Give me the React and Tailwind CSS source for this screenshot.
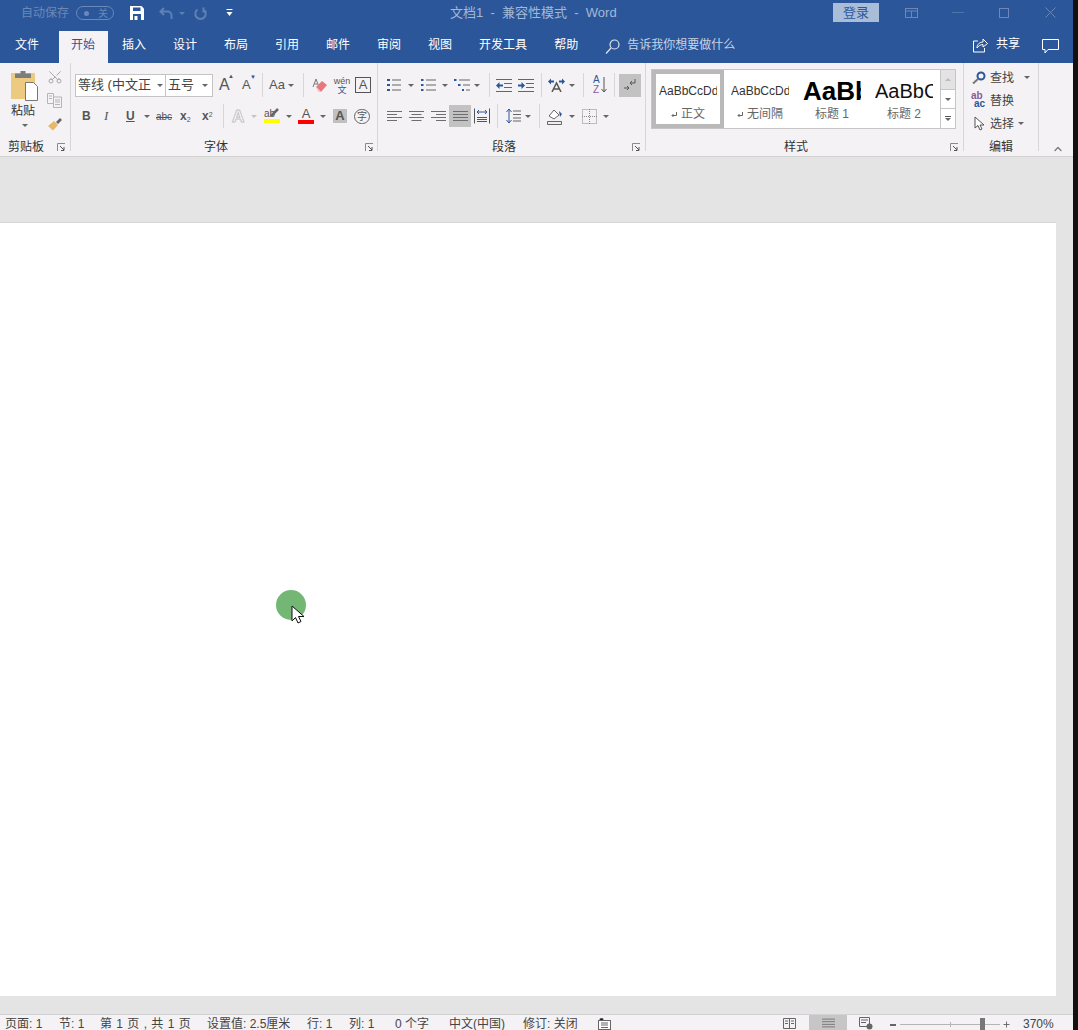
import { ChevronUp, Plus, Scissors } from "lucide-react";

const Caret = ({ className = "" }) => (
  <span className={`inline-block w-0 h-0 shrink-0 border-x-[3px] border-x-transparent border-t-[3px] border-t-[#666] ${className}`} />
);

const Sep = ({ className = "" }) => <span className={`w-px h-[24px] bg-[#d8d6d8] shrink-0 ${className}`} />;

const Launcher = () => (
  <svg width="9" height="9" viewBox="0 0 9 9" className="shrink-0">
    <path d="M0.5 8V0.5H8" fill="none" stroke="#8a8a8a" />
    <path d="M3 3l4 4M7 4v3.5H4" fill="none" stroke="#555" />
  </svg>
);

const Lines = ({ align = "left", w = 15 }) => {
  const rows = align === "left" ? [[0, 15], [0, 10], [0, 15], [0, 10]]
    : align === "center" ? [[0, 15], [2.5, 10], [0, 15], [2.5, 10]]
    : align === "right" ? [[0, 15], [5, 10], [0, 15], [5, 10]]
    : [[0, 15], [0, 15], [0, 15], [0, 15]];
  return (
    <svg width={w} height="12" viewBox="0 0 15 12" className="shrink-0">
      {rows.map((r, i) => (
        <rect key={i} x={r[0]} y={i * 3 + 1} width={r[1]} height="1" fill="#6e6e6e" />
      ))}
    </svg>
  );
};

const tabs = ["插入", "设计", "布局", "引用", "邮件", "审阅", "视图", "开发工具", "帮助"];

function TitleBar() {
  return (
    <div className="h-[31px] pb-[5px] flex items-center relative text-[12px] text-[#6a88b8]">
      <span className="ml-[21px] w-[50px]">自动保存</span>
      <span className="ml-[5px] w-[38px] h-[14px] rounded-full border border-[#6a88b8] flex items-center justify-between pl-[7px] pr-[5px] text-[10px]">
        <span className="w-[5px] h-[5px] rounded-full bg-[#6a88b8]" />
        <span>关</span>
      </span>
      <svg width="14" height="14" viewBox="0 0 14 14" className="ml-[16px]">
        <path d="M0 0h11.500l2.500 2.500V14H0z" fill="#fff" />
        <rect x="3" y="1.500" width="7.500" height="3.500" fill="#2b579a" />
        <rect x="3" y="8" width="8" height="6" fill="#2b579a" />
        <rect x="4.500" y="10" width="3" height="4" fill="#fff" />
      </svg>
      <svg width="14" height="13" viewBox="0 0 14 13" className="ml-[15px]" fill="none" stroke="#5f80b3" strokeWidth="2">
        <path d="M5 1L1.500 4.500 5 8M2 4.500h6.500a4 4 0 0 1 4 4V12" />
      </svg>
      <Caret className="ml-[6px] !border-t-[#5f80b3]" />
      <svg width="13" height="13" viewBox="0 0 13 13" className="ml-[9px]" fill="none" stroke="#5f80b3" strokeWidth="2">
        <path d="M3.500 2.500a5.200 5.200 0 1 0 6 0M9.500 0.500v4h3" />
      </svg>
      <svg width="7" height="8" viewBox="0 0 7 8" className="ml-[19px]">
        <rect x="0.500" y="0" width="6" height="1" fill="#fff" />
        <path d="M0.500 3h6L3.500 7z" fill="#fff" />
      </svg>
      <span className="absolute left-[450px] top-[3px] text-[13px] text-[#a4b8d6] whitespace-pre">文档1  -  兼容性模式  -  Word</span>
      <span className="absolute left-[833px] top-[3px] w-[46px] h-[19px] bg-[#a9bcd8] text-[#2b579a] text-[13px] leading-[19px] text-center">登录</span>
      <svg width="13" height="10" viewBox="0 0 13 10" className="absolute left-[905px] top-[8px]" fill="none" stroke="#6a88b8">
        <rect x="0.500" y="0.500" width="12" height="9" />
        <path d="M0.500 3h12M6.500 3v7" />
      </svg>
      <span className="absolute left-[952px] top-[12px] w-[12px] h-px bg-[#4f74ab]" />
      <span className="absolute left-[999px] top-[8px] w-[10px] h-[10px] border border-[#6a88b8]" />
      <svg width="11" height="11" viewBox="0 0 11 11" className="absolute left-[1045px] top-[7px]" fill="none" stroke="#6a88b8">
        <path d="M0.500 0.500l10 10M10.500 0.500l-10 10" />
      </svg>
    </div>
  );
}

function TabBar() {
  return (
    <div className="h-[32px] flex items-stretch text-[12px] text-white relative">
      <span className="w-[59px] pl-[15px] leading-[28px]">文件</span>
      <span className="w-[49px] pr-[1px] bg-[#f4f2f4] text-[#2b579a] text-center leading-[28px]">开始</span>
      <div className="flex leading-[28px] ml-[14px] gap-[27px]">
        {tabs.map((t) => (
          <span key={t}>{t}</span>
        ))}
      </div>
      <svg width="15" height="15" viewBox="0 0 15 15" className="ml-[27px] mt-[8px]" fill="none" stroke="#dde5f0" strokeWidth="1.200">
        <circle cx="9.500" cy="5.500" r="4.500" />
        <path d="M6 9l-5 5.500" />
      </svg>
      <span className="ml-[7px] leading-[29px] text-[#c6d3e6]">告诉我你想要做什么</span>
      <svg width="15" height="15" viewBox="0 0 15 15" className="absolute left-[973px] top-[7px]" fill="none" stroke="#fff">
        <path d="M5 3H0.500v11h11v-4M4 10c0-4 3-6 6-6V1l4.500 4.500L10 9V6.500C7.500 6.500 5.500 8 4 10z" />
      </svg>
      <span className="absolute left-[996px] top-0 leading-[27px]">共享</span>
      <svg width="17" height="15" viewBox="0 0 17 15" className="absolute left-[1042px] top-[8px]" fill="none" stroke="#fff">
        <path d="M0.500 0.500h16v10H6l-3 3.500v-3.500H0.500z" />
      </svg>
    </div>
  );
}

function Clipboard() {
  return (
    <div className="w-[71px] shrink-0 flex flex-col border-r border-[#d8d6d8] mb-[5px]">
      <div className="flex">
        <div className="w-[47px] flex flex-col items-start pl-[10px] pt-[8px]">
          <svg width="29" height="30" viewBox="0 0 29 30">
            <rect x="1" y="2" width="24" height="26" fill="#eccb80" />
            <rect x="5" y="2.500" width="16" height="4.500" fill="#7d7d7d" />
            <rect x="10.500" y="0" width="5" height="3" fill="#7d7d7d" />
            <path d="M15.500 11.500h8l4 4v14h-12z" fill="#fff" stroke="#777" />
          </svg>
          <span className="text-[12px] leading-[14px] text-[#333] mt-[3px] ml-[1px]">粘贴</span>
          <Caret className="mt-[6px] ml-[12px]" />
        </div>
        <div className="flex flex-col pt-[6px]">
          <Scissors size={16} strokeWidth={1.500} className="text-[#a8a8a8] -rotate-90" />
          <svg width="15" height="15" viewBox="0 0 15 15" fill="none" stroke="#b5b5b5" className="mt-[8px]">
            <path d="M0.500 0.500h6v10h-6zM6.500 4h8v10.500h-8zM2 3h3M2 5.500h3M8 7h5M8 9h5M8 11.500h5" />
          </svg>
          <svg width="16" height="14" viewBox="0 0 16 14" className="mt-[9px]">
            <path d="M1 9l6-5 4 4-5 5.500z" fill="#e6b86a" />
            <path d="M9 5l4-4 2 2-4 4z" fill="#666" />
          </svg>
        </div>
      </div>
      <div className="h-[20px] mt-auto -mb-[6px] flex items-center justify-between pl-[8px] pr-[4px] text-[12px] text-[#333]">
        <span>剪贴板</span>
        <Launcher />
      </div>
    </div>
  );
}

function FontGroup() {
  return (
    <div className="w-[307px] shrink-0 flex flex-col border-r border-[#d8d6d8] mb-[5px] text-[#555]">
      <div className="flex items-center h-[24px] mt-[10px] ml-[4px]">
        <div className="w-[91px] h-[23px] bg-white border border-[#c4c4c4] flex items-center text-[13px] text-[#444] pl-[2px]">
          <span className="whitespace-nowrap w-[73px] overflow-hidden">等线 (中文正文)</span>
          <Caret className="ml-[6px]" />
        </div>
        <div className="w-[47px] h-[23px] bg-white border border-l-0 border-[#c4c4c4] flex items-center justify-between text-[13px] text-[#444] pl-[2px] pr-[4px]">
          <span>五号</span>
          <Caret />
        </div>
        <span className="ml-[6px] w-[11px] text-[16px] relative">A<span className="absolute -top-[1px] -right-[4px] text-[6px]">▲</span></span>
        <span className="ml-[12px] w-[9px] text-[13px] relative">A<span className="absolute -top-[2px] -right-[5px] text-[6px] text-[#2b579a]">▼</span></span>
        <Sep className="ml-[11px]" />
        <span className="ml-[6px] w-[16px] text-[13px]">Aa</span>
        <Caret className="ml-[3px]" />
        <Sep className="ml-[9px]" />
        <svg width="16" height="16" viewBox="0 0 16 16" className="ml-[8px]">
          <path d="M1 10L4 2l3 8M2.500 7h3" fill="none" stroke="#777" />
          <path d="M4 10l6-6 5 4-6 7z" fill="#e8787f" />
          <path d="M4 10l5 5-3 0z" fill="#f3c9cc" />
        </svg>
        <span className="ml-[6px] flex flex-col items-center w-[16px] text-[9px] leading-[8px] text-[#555]">
          <span>wén</span>
          <span className="text-[#2b579a] mt-[1px]">文</span>
        </span>
        <span className="ml-[5px] w-[16px] h-[16px] border border-[#555] text-[13px] leading-[14px] text-center">A</span>
      </div>
      <div className="flex items-center h-[26px] mt-[6px] ml-0">
        <span className="ml-[11px] w-[9px] text-[12px] font-bold">B</span>
        <span className="ml-[13px] w-[7px] text-[13px] italic font-['Liberation_Serif']">I</span>
        <span className="ml-[15px] w-[9px] text-[12px] font-bold underline">U</span>
        <Caret className="ml-[9px]" />
        <span className="ml-[6px] w-[16px] text-[10px] line-through">abc</span>
        <span className="ml-[8px] w-[12px] text-[12px] font-bold leading-[12px]">x<sub className="text-[7px] font-normal">2</sub></span>
        <span className="ml-[10px] w-[12px] text-[12px] font-bold leading-[12px]">x<sup className="text-[7px] font-normal">2</sup></span>
        <Sep className="ml-[9px]" />
        <span className="ml-[8px] w-[14px] text-[17px] leading-[17px] font-bold text-white [-webkit-text-stroke:1px_#c4c4c4]">A</span>
        <Caret className="ml-[5px] !border-t-[#c4c4c4]" />
        <div className="ml-[7px] flex flex-col w-[16px]">
          <div className="flex h-[10px] items-start">
            <span className="text-[10px] leading-[9px]">ab</span>
            <svg width="9" height="9" viewBox="0 0 9 9" className="-ml-[5px] -mt-[1px]">
              <path d="M1 8l7-7" stroke="#666" strokeWidth="2.500" />
            </svg>
          </div>
          <span className="w-[16px] h-[4px] bg-[#ffff00]" />
        </div>
        <Caret className="ml-[6px]" />
        <div className="ml-[6px] flex flex-col items-center w-[16px]">
          <span className="text-[13px] leading-[11px]">A</span>
          <span className="w-[16px] h-[4px] mt-[1px] bg-[#ff0000]" />
        </div>
        <Caret className="ml-[6px]" />
        <span className="ml-[7px] w-[14px] h-[14px] bg-[#c0c0c0] text-[13px] leading-[14px] font-bold text-center">A</span>
        <span className="ml-[7px] w-[16px] h-[15px] rounded-full border border-[#666] text-[10px] leading-[13px] text-center">字</span>
      </div>
      <div className="h-[20px] mt-auto -mb-[6px] flex items-center justify-between pr-[3px] text-[12px] text-[#333]">
        <span className="ml-[133px]">字体</span>
        <Launcher />
      </div>
    </div>
  );
}

function ParagraphGroup() {
  return (
    <div className="w-[268px] shrink-0 flex flex-col border-r border-[#d8d6d8] mb-[5px]">
      <div className="flex items-center h-[24px] mt-[10px] ml-[9px]">
        <svg width="14" height="14" viewBox="0 0 14 14" className="shrink-0">
          <path d="M0 1h3v2H0zM0 6h3v2H0zM0 11h3v2H0z" fill="#2b579a" />
          <path d="M5 2h9M5 7h9M5 12h9" stroke="#666" />
        </svg>
        <Caret className="ml-[7px]" />
        <svg width="15" height="15" viewBox="0 0 15 15" className="ml-[7px] shrink-0">
          <path d="M0 1h2.500v2H0zM0 6h2.500v2H0zM0 11h2.500v2H0z" fill="#2b579a" />
          <path d="M5 2h10M5 7h10M5 12h10" stroke="#666" />
        </svg>
        <Caret className="ml-[6px]" />
        <svg width="17" height="15" viewBox="0 0 17 15" className="ml-[6px] shrink-0">
          <path d="M0 1h2.500v2H0zM4 6h2.500v2H4zM8 11h2v2H8z" fill="#2b579a" />
          <path d="M5 2h11M9 7h7M12 12h4" stroke="#666" />
        </svg>
        <Caret className="ml-[3px]" />
        <Sep className="ml-[9px]" />
        <svg width="16" height="13" viewBox="0 0 16 13" className="ml-[6px] shrink-0">
          <path d="M0 6.500L3.500 3v2.500H7v2H3.500V10z" fill="#2b579a" />
          <path d="M0 0.500h16M8 4.500h8M8 8.500h8M0 12.500h16" stroke="#666" />
        </svg>
        <svg width="16" height="13" viewBox="0 0 16 13" className="ml-[6px] shrink-0">
          <path d="M7 6.500L3.500 3v2.500H0v2h3.500V10z" fill="#2b579a" />
          <path d="M0 0.500h16M8 4.500h8M8 8.500h8M0 12.500h16" stroke="#666" />
        </svg>
        <Sep className="ml-[7px]" />
        <svg width="17" height="14" viewBox="0 0 17 14" className="ml-[6px] shrink-0">
          <path d="M4 14L8.500 5 13 14M5.500 11h6" fill="none" stroke="#555" strokeWidth="1.500" />
          <path d="M0 3.500L3 0.500v2h3v2H3v2zM17 3.500L14 0.500v2h-3v2h3v2z" fill="#2b579a" />
        </svg>
        <Caret className="ml-[4px]" />
        <Sep className="ml-[8px]" />
        <span className="ml-[9px] w-[8px] flex flex-col text-[10px] leading-[10px]"><span className="text-[#2b579a]">A</span><span className="text-[#8a5a9c]">Z</span></span>
        <svg width="6" height="16" viewBox="0 0 6 16" fill="none" stroke="#555" className="shrink-0">
          <path d="M3 0v15M0.500 12l2.500 3 2.500-3" />
        </svg>
        <Sep className="ml-[7px]" />
        <span className="ml-[4px] w-[22px] h-[23px] bg-[#c2c2c2] flex items-center justify-center">
          <svg width="12" height="14" viewBox="0 0 12 14" fill="none" stroke="#555">
            <path d="M11 1v4H6M8 3L6 5l2 2M0 10h5M3 8l2 2-2 2" />
          </svg>
        </span>
      </div>
      <div className="flex items-center h-[26px] mt-[6px] ml-[9px]">
        <Lines align="left" />
        <span className="ml-[7px] flex"><Lines align="center" /></span>
        <span className="ml-[7px] flex"><Lines align="right" /></span>
        <span className="ml-[3px] w-[22px] h-[22px] flex items-center justify-center bg-[#c2c2c2]"><Lines align="full" /></span>
        <svg width="16" height="16" viewBox="0 0 16 16" className="ml-[3px] shrink-0" fill="none">
          <path d="M0.500 0.500v15M15.500 0.500v15M3 9.500h10M3 11.500h10M3 13.500h10" stroke="#555" />
          <path d="M3 4h10M5 2L3 4l2 2M11 2l2 2-2 2" stroke="#2b579a" />
        </svg>
        <Sep className="ml-[7px]" />
        <svg width="15" height="16" viewBox="0 0 15 16" className="ml-[8px] shrink-0" fill="none">
          <path d="M3 1v14M0.500 4L3 1l2.500 3M0.500 12L3 15l2.500-3" stroke="#2b579a" />
          <path d="M7 3h8M7 6.500h8M7 10h8M7 13h8" stroke="#666" />
        </svg>
        <Caret className="ml-[4px]" />
        <Sep className="ml-[8px]" />
        <svg width="16" height="17" viewBox="0 0 16 17" className="ml-[7px] shrink-0" fill="none" stroke="#666">
          <path d="M2 8l5-6 5 5-5 4z" fill="#fff" />
          <path d="M12 3l3 3-2 3z" fill="#2b579a" stroke="none" />
          <path d="M0.500 13.500h14v3H0.500z" fill="#eeeeee" />
        </svg>
        <Caret className="ml-[6px]" />
        <svg width="15" height="15" viewBox="0 0 15 15" className="ml-[7px] shrink-0" fill="none" stroke="#888" strokeDasharray="1 1">
          <rect x="0.500" y="0.500" width="14" height="14" />
          <path d="M7.500 0v15M0 7.500h15" />
        </svg>
        <Caret className="ml-[6px]" />
      </div>
      <div className="h-[20px] mt-auto -mb-[6px] flex items-center justify-between pr-[4px] text-[12px] text-[#333]">
        <span className="ml-[114px]">段落</span>
        <Launcher />
      </div>
    </div>
  );
}

function StyleCell({ sample, label, className, mark, selected }) {
  return (
    <div className={`w-[72px] shrink-0 h-[58px] flex flex-col items-center bg-white ${selected ? "border-[4px] border-[#b9b9b9]" : ""}`}>
      <span className={`w-[58px] overflow-hidden whitespace-nowrap h-[30px] leading-[30px] text-[#333] ${selected ? "mt-[2px]" : "mt-[6px]"} ${className}`}>{sample}</span>
      <span className="h-[14px] mt-[1px] flex items-center text-[12px] text-[#666] whitespace-nowrap">
        {mark && (
          <svg width="6" height="6" viewBox="0 0 6 6" className="mr-[4px] mt-[2px]" fill="none" stroke="#666">
            <path d="M5.500 0v3.500H1M2.500 2L1 3.500 2.500 5" />
          </svg>
        )}
        {label}
      </span>
    </div>
  );
}

function StylesGroup() {
  return (
    <div className="w-[318px] shrink-0 flex flex-col border-r border-[#d8d6d8] mb-[5px] pl-[5px]">
      <div className="mt-[6px] h-[60px] w-[305px] flex border border-[#c6c6c6] bg-white">
        <StyleCell sample="AaBbCcDd" label="正文" mark selected className="text-[12px]" />
        <StyleCell sample="AaBbCcDd" label="无间隔" mark className="text-[12px]" />
        <StyleCell sample="AaBb" label="标题 1" className="text-[26px] font-bold !text-black" />
        <StyleCell sample="AaBbC" label="标题 2" className="text-[20px] !text-[#111]" />
        <div className="w-[15px] border-l border-[#c6c6c6] flex flex-col items-center">
          <span className="h-[20px] w-full bg-[#e3e3e3] flex items-center justify-center border-b border-[#c6c6c6]"><Caret className="rotate-180 !border-t-[#bbb]" /></span>
          <span className="h-[19px] w-full flex items-center justify-center border-b border-[#c6c6c6]"><Caret /></span>
          <span className="h-[19px] w-full flex flex-col gap-[1px] items-center justify-center">
            <span className="w-[6px] h-px bg-[#555]" />
            <Caret />
          </span>
        </div>
      </div>
      <div className="h-[20px] mt-auto -mb-[6px] flex items-center justify-between pr-[4px] text-[12px] text-[#333]">
        <span className="ml-[133px]">样式</span>
        <Launcher />
      </div>
    </div>
  );
}

function EditGroup() {
  return (
    <div className="w-[75px] shrink-0 flex flex-col border-r border-[#d8d6d8] mb-[5px] text-[12px] text-[#444] pl-[7px]">
      <div className="flex items-center h-[23px] mt-[3px]">
        <svg width="14" height="13" viewBox="0 0 14 13" className="ml-[1px]" fill="none" stroke="#2b579a" strokeWidth="2">
          <circle cx="9" cy="5" r="3.500" />
          <path d="M6 8l-5 4.500" stroke="#777" />
        </svg>
        <span className="ml-[4px]">查找</span>
        <Caret className="ml-[10px]" />
      </div>
      <div className="flex items-center h-[23px]">
        <span className="w-[16px] flex flex-col text-[10px] leading-[10px] font-bold -mt-[2px]">
          <span className="text-[#8a5a9c]">ab</span>
          <span className="text-[#2b579a] ml-[3px] -mt-[2px] leading-[10px]">ac</span>
        </span>
        <span className="ml-[3px]">替换</span>
      </div>
      <div className="flex items-center h-[23px]">
        <svg width="12" height="15" viewBox="0 0 12 15" className="ml-[3px]" fill="#fff" stroke="#555">
          <path d="M1 1v11l3-2.500 2 4.500 2-1-2-4h4z" />
        </svg>
        <span className="ml-[4px]">选择</span>
        <Caret className="ml-[4px]" />
      </div>
      <span className="h-[20px] mt-auto -mb-[6px] leading-[20px] ml-[18px] text-[#333]">编辑</span>
    </div>
  );
}

function Ribbon() {
  return (
    <div className="h-[94px] bg-[#f4f2f4] border-b border-[#d2d2d2] flex relative">
      <Clipboard />
      <FontGroup />
      <ParagraphGroup />
      <StylesGroup />
      <EditGroup />
      <ChevronUp size={12} strokeWidth={2.500} className="absolute left-[1052px] top-[80px] text-[#777]" />
    </div>
  );
}

function StatusBar() {
  return (
    <div className="h-[16px] pt-[2px] bg-[#f4f2f4] border-t border-[#d2d2d2] flex items-center text-[12px] text-[#444] relative whitespace-nowrap overflow-hidden">
      <span className="ml-[5px] w-[54px]">页面: 1</span>
      <span className="w-[41px]">节: 1</span>
      <span className="w-[107px] [word-spacing:1px]">第 1 页 , 共 1 页</span>
      <span className="w-[100px]">设置值: 2.5厘米</span>
      <span className="w-[42px]">行: 1</span>
      <span className="w-[46px]">列: 1</span>
      <span className="w-[54px]">0 个字</span>
      <span className="w-[74px]">中文(中国)</span>
      <span className="w-[75px]">修订: 关闭</span>
      <svg width="13" height="12" viewBox="0 0 13 12">
        <rect x="0.500" y="2.500" width="12" height="9" fill="#fff" stroke="#666" />
        <path d="M2 0.500h3v2H2zM3 5h7M3 7h7M3 9.500h7" stroke="#666" />
      </svg>
      <svg width="13" height="11" viewBox="0 0 13 11" className="absolute left-[783px] top-[3px]" fill="none" stroke="#666">
        <path d="M0.500 0.500h12v10H0.500zM6.500 0.500v10M2 3h3M2 5.500h3M8 3h3M8 5.500h3" />
      </svg>
      <span className="absolute left-[809px] top-0 w-[38px] h-[16px] bg-[#c6c6c6] flex items-center justify-center">
        <Lines align="full" w={13} />
      </span>
      <svg width="14" height="13" viewBox="0 0 14 13" className="absolute left-[859px] top-[2px]" fill="none" stroke="#666">
        <path d="M0.500 0.500h10v9H0.500zM2 3h7M2 5.500h5" />
        <circle cx="10.500" cy="9.500" r="3" fill="#666" stroke="none" />
      </svg>
      <span className="absolute left-[890px] top-[9px] w-[6px] h-[2px] bg-[#666]" />
      <span className="absolute left-[900px] top-[9px] w-[100px] h-px bg-[#b5b5b5]" />
      <span className="absolute left-[950px] top-[7px] w-px h-[5px] bg-[#b5b5b5]" />
      <span className="absolute left-[980px] top-[3px] w-[5px] h-[12px] bg-[#777]" />
      <Plus size={9} strokeWidth={2.500} className="absolute left-[1002px] top-[5px] text-[#666]" />
      <span className="absolute left-[1023px] top-0 leading-[18px]">370%</span>
    </div>
  );
}

export default function App() {
  return (
    <div className="w-[1078px] h-[1030px] overflow-hidden bg-[#111] font-['Liberation_Sans','Noto_Sans_CJK_SC',sans-serif]">
      <div className="w-[1073px] h-[1030px] flex flex-col relative">
        <div className="bg-[#2b579a]">
          <TitleBar />
          <TabBar />
        </div>
        <Ribbon />
        <div className="flex-1 bg-[#e4e4e4] pt-[65px] pb-[18px] relative">
          <div className="w-[1056px] h-full bg-white border-t border-[#d6d6d6]" />
          <div className="absolute left-[276px] top-[433px] w-[30px] h-[30px] rounded-full bg-[#74b674]" />
          <svg width="14" height="20" viewBox="0 0 14 20" className="absolute left-[291px] top-[448px]">
            <path d="M1 1v15l3.500-3.500L7 18l3-1.500-2.500-5H13z" fill="#fff" stroke="#111" />
          </svg>
        </div>
        <StatusBar />
      </div>
    </div>
  );
}
